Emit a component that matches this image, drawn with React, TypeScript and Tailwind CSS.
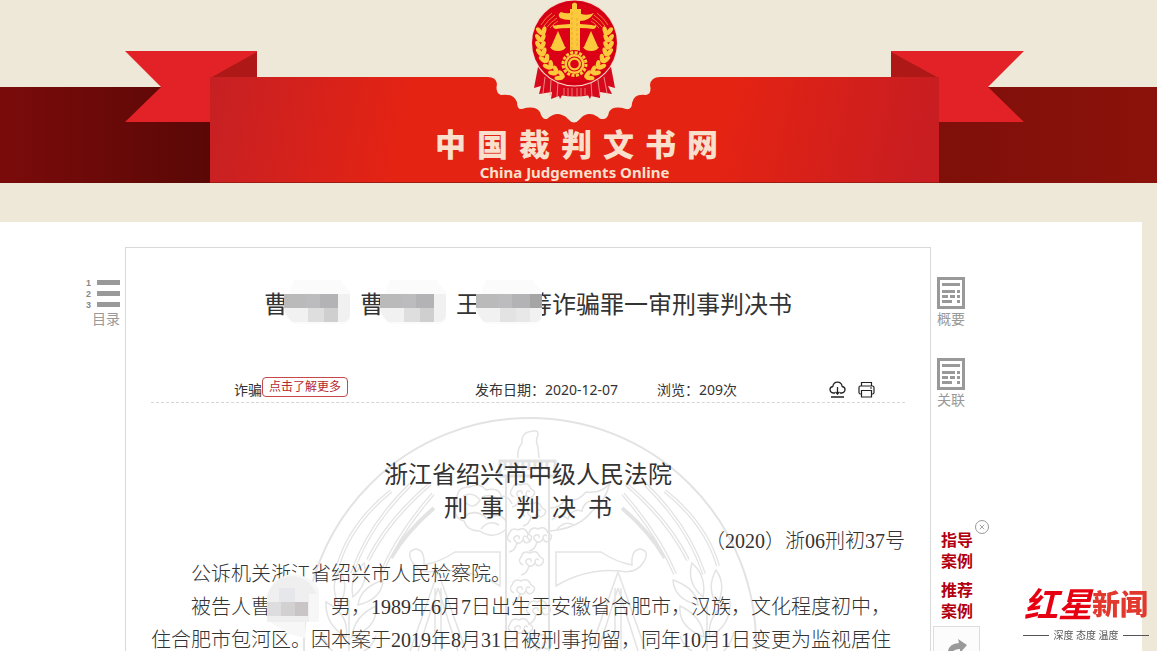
import type { ReactNode } from 'react';
import { X } from 'lucide-react';

const SANS = "font-['Noto_Sans','Noto_Sans_CJK_SC',sans-serif]";
const SERIF = "font-['Liberation_Serif','Noto_Sans_CJK_SC',serif]";

const siteName = ['中', '国', '裁', '判', '文', '书', '网'];
const docKind = ['刑', '事', '判', '决', '书'];

// ears of wheat on the left half, from the tip down to the stalk
const wheat = [
  [541, 30, -12], [540, 37, -6], [540, 44, 0], [541, 51, -10], [544, 58, -22],
  [548, 65, -36], [553, 71, -50], [559, 76, -64],
];

function Emblem() {
  const half = (
    <g>
      {wheat.map(([x, y, r]) => (
        <g key={y} transform={`translate(${x} ${y}) rotate(${r})`}>
          <ellipse cx="-2" cy="0" rx="2.3" ry="4.6" transform="rotate(-28)" />
          <ellipse cx="3" cy="0" rx="2.3" ry="4.6" transform="rotate(28)" />
        </g>
      ))}
      <path
        d="M541 25Q545 18 552 13M544 26Q548 20 555 15M547 27Q551 22 557 18M550 28Q553 24 558 21"
        fill="none"
        stroke="#f29a38"
        strokeWidth="0.8"
      />
      <path d="M558 31L551 47H565Z" />
      <path d="M550 47H566Q564 51 558 51Q552 51 550 47Z" />
    </g>
  );

  return (
    <g>
      <path d="M538 67L534 88L541 86L539 94L552 92L551 99L559 96L560 99L566 88H584L590 99L591 96L600 98L600 92L612 94L608 86L615 88L611 67Z" fill="#d60a1c" />
      <path d="M545 77L543 93M551 80L550 96M558 82L557 97M604 77L607 93M598 80L600 96M591 82L592 97" stroke="#f2a79b" strokeWidth="0.8" />
      <path d="M560 86H590V95Q575 98 560 95Z" fill="#d60a1c" />
      <path d="M564 88V95M568 88V96M572 88V96M577 88V96M581 88V96M585 88V95" stroke="#f2a79b" strokeWidth="0.7" />
      <circle cx="574.5" cy="43" r="43.5" fill="#f3ddcd" />
      <circle cx="574.5" cy="43" r="42.5" fill="#dc0016" />
      <circle cx="574.5" cy="43" r="40.5" fill="none" stroke="#c50012" strokeWidth="1" />
      <g fill="#fbc93b">
        {half}
        <g transform="translate(1149 0) scale(-1 1)">{half}</g>
        <path d="M572 4Q575 1 577 4V9H581V14Q588 16 594 13Q589 21 580 21V53H570V20Q564 20 560 18Q557 14 561 12Q566 14 570 13V9H572Z" />
        <path d="M570 28Q561 28 556 29Q552 28 553 25Q555 26 557 25L570 24ZM580 24L592 25Q594 26 596 25Q597 28 593 29Q588 28 580 28Z" />
      </g>
      <path d="M572 12V50M577 18V48" stroke="#f0a233" strokeWidth="0.8" strokeDasharray="3 2" />
      <circle cx="574.5" cy="64" r="14" fill="#dc0016" />
      <circle cx="574.5" cy="64" r="11.5" fill="none" stroke="#fbc93b" strokeWidth="3" strokeDasharray="3 1.5" />
      <circle cx="574.5" cy="64" r="10" fill="#fbc93b" />
      <circle cx="574.5" cy="64" r="7.5" fill="#dc0016" />
      <circle cx="574.5" cy="64" r="6.5" fill="#fbc93b" />
      <circle cx="574.5" cy="64" r="4.3" fill="#dc0016" />
    </g>
  );
}

function Ribbon() {
  return (
    <svg className="h-[183px] w-[899px]" viewBox="125 0 899 183" aria-hidden="true">
      <defs>
        <linearGradient id="front" x1="0" x2="1" y1="0" y2="0.03">
          <stop offset="0" stopColor="#c62024" />
          <stop offset="0.28" stopColor="#e42313" />
          <stop offset="0.72" stopColor="#e42313" />
          <stop offset="1" stopColor="#c81d21" />
        </linearGradient>
      </defs>
      <path d="M257 51V78H209Z" fill="#ae1917" />
      <path d="M125 51H257V52L210 78V122H125L161 87Z" fill="#e32227" />
      <path d="M891 51V78H940Z" fill="#ae1917" />
      <path d="M1024 51H891V52L939 78V122H1024L988 87Z" fill="#e32227" />
      <path d="M485 70H665V128H485Z" fill="#eee8d9" />
      <path
        d="M210 77H488Q496 77 497 84Q495 93 501 95Q513 93 517 102Q517 110 522 109Q535 105 540 112Q542 120 547 119Q555 112 562 115Q566 116 568 119Q574 126 580 119Q583 115 588 114C597 113 598 120 604 119Q608 118 609 112Q613 105 626 109Q632 110 632 103Q634 93 646 95Q652 94 650 85Q651 77 660 77H939V182H210Z"
        fill="url(#front)"
      />
      <path d="M210 182.5H939" stroke="#9f1a12" />
      <Emblem />
    </svg>
  );
}

// outline version of the court emblem printed behind the judgment
function Watermark() {
  const half = (
    <g>
      <path d="M500 552H455Q440 562 424 565Q425 550 416 549Q405 551 413 563Q420 574 436 571Q470 568 500 586Z" />
      <path d="M438 572L410 651M438 572L466 651M438 588L418 651M438 588L458 651M435 588V651M441 588V651" />
      <path
        d="M338 566Q350 524 391 491M352 574Q368 526 410 485M368 560Q388 520 430 484M381 574Q398 534 433 494M391 558Q406 532 434 508"
        strokeWidth="4"
      />
      <path
        d="M338 566Q350 524 391 491M352 574Q368 526 410 485M368 560Q388 520 430 484M381 574Q398 534 433 494"
        stroke="#ffffff"
        strokeWidth="1.5"
      />
      <path d="M340 570Q329 585 339 605Q350 588 340 570ZM364 563Q349 576 353 597Q370 583 364 563ZM383 580Q382 599 358 605Q360 588 383 580ZM326 602Q325 625 346 637Q350 615 326 602ZM376 606Q378 627 352 637Q354 616 376 606ZM322 632Q326 650 344 660M376 636Q371 651 353 656M349 600V655" />
    </g>
  );
  const cloud = 'M0 8Q-6 5 -2 0Q0 -7 7 -4Q14 -8 17 0Q23 2 19 7Q15 11 12 6Q8 12 4 7Q1 4 5 2Q9 1 8 5M12 6Q12 0 16 3M6 9Q4 17 -2 18';

  return (
    <svg
      className="pointer-events-none absolute top-2 left-1/2 -z-10 h-[250px] w-[460px] -translate-x-1/2"
      viewBox="298 411 460 250"
      fill="none"
      stroke="#e3e3e3"
      strokeWidth="1.5"
      aria-hidden="true"
    >
      <circle cx="530" cy="644" r="226" strokeWidth="2" />
      {half}
      <g transform="translate(1056 0) scale(-1 1)">{half}</g>
      <path d="M518 458Q517 449 522 443Q521 432 533 431Q539 430 538 435Q535 441 538 447L539 458" />
      <path d="M500 461H555V476H500ZM505 461V470M511 461V470M517 461V470M523 461V470M529 461V470M535 461V470M541 461V470M547 461V470" strokeWidth="3" />
      <path d="M506 476V661M549 476V661" strokeWidth="2" />
      <path d="M505 530Q493 540 480 531Q467 531 464 521Q452 518 457 504Q455 486 470 487Q479 482 486 490Q499 487 501 496Q509 496 512 504M463 496Q473 491 480 500Q474 510 466 503M482 497Q495 492 500 504Q490 512 484 505M464 516Q478 508 487 519Q499 511 506 521M481 529Q489 519 499 525" />
      <path d="M550 531Q580 528 592 511Q605 502 610 483Q602 494 586 492Q577 503 565 500Q560 508 550 508M552 520Q560 512 568 519Q572 508 582 511Q584 500 597 500M557 529Q565 520 574 525" />
      <path d={cloud} transform="translate(514 489)" />
      <path d={cloud} transform="translate(525 508)" />
      <path d={cloud} transform="translate(511 534)" />
      <path d={cloud} transform="translate(531 533)" />
      <path d={cloud} transform="translate(523 557)" />
      <path d={cloud} transform="translate(514 585)" />
      <path d={cloud} transform="translate(530 606)" />
      <path d={cloud} transform="translate(512 624)" />
      <path d={cloud} transform="translate(531 640)" />
    </svg>
  );
}

function Mosaic({ wide }: { wide?: boolean }) {
  return (
    <svg className="absolute -top-[6px] -left-1 h-11 w-[68px]" viewBox="0 0 68 44" aria-hidden="true">
      <path d="M4 16L10 0H56L66 12V40L60 44H10L0 34V16Z" fill="#fbfbfb" />
      <path d="M0 14H66V36Q64 42 58 42H8Q0 34 0 26Z" fill="#f1f1f1" />
      <path d="M0 14H24V28H0Z" fill="#b9bab9" />
      <path d="M22 14H38V28H22Z" fill="#bcbbbe" />
      <path d="M36 14H54V28H36Z" fill="#b3b2b4" />
      <path d="M24 28H40V42H24Z" fill={wide ? '#e3e3e3' : '#dedede'} />
      <path d="M40 28H54V42H40Z" fill={wide ? '#e8e8e8' : '#cfcfcf'} />
      {wide && <path d="M54 14H66V28H54Z" fill="#a5a5a6" />}
    </svg>
  );
}

function PageIcon() {
  return (
    <svg className="h-8 w-7" viewBox="0 0 28 32" aria-hidden="true">
      <path d="M1.5 1.5H26.5V30.5H1.5Z" fill="#ffffff" stroke="#999999" strokeWidth="3" />
      <path d="M5 7.5H23M5 14.5H18M20 14.5H23M5 19.5H11M13 19.5H18M20 19.5H23M5 24.5H15M20 24.5H23" stroke="#999999" strokeWidth="3" />
    </svg>
  );
}

function SideButton({ label, children }: { label: string; children: ReactNode }) {
  return (
    <button type="button" className="flex flex-col items-start text-sm leading-5 text-[#999]">
      {children}
      <span>{label}</span>
    </button>
  );
}

function NewsBadge() {
  return (
    <div className="fixed right-2 bottom-2 flex w-[126px] flex-col items-center">
      <div className="mb-1 flex items-end font-['Noto_Sans_CJK_SC',sans-serif] leading-10">
        <span className="text-[34px] font-bold text-[#e60012] italic">红星</span>
        <span className="text-[28px] font-black text-[#e2392f]">新闻</span>
      </div>
      <div className="flex w-full items-center gap-1 text-[10px] leading-4 whitespace-nowrap text-[#555]">
        <span className="h-px flex-1 bg-[#555]" />
        <span>深度 态度 温度</span>
        <span className="h-px flex-1 bg-[#555]" />
      </div>
    </div>
  );
}

export default function App() {
  return (
    <div className={`${SANS} flex h-screen flex-col overflow-hidden bg-[#eee8d9] text-[#333]`}>
      <header className="relative h-[183px] shrink-0 pr-2">
        <div className="absolute inset-x-0 top-[87px] bottom-0 bg-linear-to-r from-[#7b0b0b] via-[#5a0806] via-18% to-[#8b120b]" />
        <div className="relative mx-auto flex w-[899px] flex-col items-center">
          <Ribbon />
          <div className="absolute top-[124px] flex flex-col items-center text-[#f8e0cd]">
            <h1 className="flex gap-[11px] pl-1 font-['Noto_Sans_CJK_SC',sans-serif] text-[31px] leading-[38px] font-black">
              {siteName.map((char) => (
                <span key={char}>{char}</span>
              ))}
            </h1>
            <p className="text-[15px] leading-5 font-bold">China Judgements Online</p>
          </div>
        </div>
      </header>

      <main className="mt-[39px] mr-[15px] flex min-h-0 flex-1 bg-white pt-[25px]">
        <nav className="flex w-[125px] shrink-0 justify-end pt-[30px] pr-[5px]">
          <div>
            <button type="button" className="flex flex-col items-end text-sm leading-5 text-[#999]">
              <svg className="h-8 w-[34px]" viewBox="0 0 34 32" aria-hidden="true">
                <path d="M11 5.5H34M11 16.5H34M11 27.5H34" stroke="#999999" strokeWidth="5" />
                <g fill="#888888" fontFamily="Liberation Sans" fontSize="9" fontWeight="700">
                  <text x="0" y="9">1</text>
                  <text x="0" y="20">2</text>
                  <text x="0" y="31">3</text>
                </g>
              </svg>
              <span>目录</span>
            </button>
          </div>
        </nav>

        <article className="min-w-0 flex-1 border border-b-0 border-[#d9d9d9] px-[25px]">
          <h2 className="mt-[38px] flex justify-center text-2xl leading-9 whitespace-nowrap">
            曹
            <span className="relative w-[72px]">
              <Mosaic />
            </span>
            曹
            <span className="relative w-[72px]">
              <Mosaic />
            </span>
            王
            <span className="w-12" />
            <span className="relative">
              等诈骗罪一审刑事判决书
              <span className="absolute top-0 -left-12">
                <Mosaic wide />
              </span>
            </span>
          </h2>

          <div className="mt-[55px] flex h-[26px] items-center border-b border-dashed border-[#d5d5d5] pr-[30px] pl-[83px] text-sm whitespace-nowrap">
            <div className="flex w-[241px] items-center">
              诈骗
              <a href="#more" className="mb-[6px] rounded border border-[#c7474b] px-[6px] text-xs leading-[18px] text-[#b52a2e]">
                点击了解更多
              </a>
            </div>
            <span className="w-[182px]">发布日期：2020-12-07</span>
            <span className="flex-1">浏览：209次</span>
            <div className="flex gap-3 text-[#222]">
              <button type="button" aria-label="下载">
                <svg className="size-[17px]" viewBox="0 0 17 17" fill="none" stroke="currentColor" strokeWidth="1.3" aria-hidden="true">
                  <path d="M6 12H4.5Q1 11.500 1 8.500Q1 6 3.800 5.500Q4.500 1.200 8.500 1.200Q12.500 1.200 13.200 5.500Q16 6 16 8.500Q16 11.500 12.500 12H11M8.500 6V13M6.500 11L8.500 13L10.500 11M2 16H15" />
                </svg>
              </button>
              <button type="button" aria-label="打印">
                <svg className="size-[17px]" viewBox="0 0 17 17" fill="none" stroke="currentColor" strokeWidth="1.2" aria-hidden="true">
                  <path d="M3.500 5V1.500H13.500V5M3.500 13H2.500Q1 13 1 11.500V6.500Q1 5 2.500 5H14.500Q16 5 16 6.500V11.500Q16 13 14.500 13H13.500M3.500 9.500H13.500V16H3.500ZM12 7H14" />
                </svg>
              </button>
            </div>
          </div>

          <section className="relative isolate pt-[54px]">
            <Watermark />
            <h3 className="text-center text-2xl leading-[33px]">
              浙江省绍兴市中级人民法院
              <span className="flex justify-center gap-3">
                {docKind.map((char) => (
                  <span key={char}>{char}</span>
                ))}
              </span>
            </h3>
            <div className={`${SERIF} pt-[2px] text-xl leading-[33px] font-light`}>
              <p className="text-right">（2020）浙06刑初37号</p>
              <p className="indent-10">公诉机关浙江省绍兴市人民检察院。</p>
              <p className="indent-10">
                被告人曹
                <span className="relative inline-block w-[60px] indent-0">
                  <svg className="absolute -top-[40px] -left-1 h-[66px] w-[60px]" viewBox="0 0 60 66" aria-hidden="true">
                    <path d="M0 26Q4 2 26 0Q46 2 52 16V48H38V64L22 60L0 46Z" fill="#f7f7f7" />
                    <path d="M0 22Q6 2 26 2Q42 4 50 20H42V48H0Z" fill="#efefef" />
                    <path d="M12 14H28V28H12Z" fill="#e6e7ea" />
                    <path d="M0 28H14V42H0Z" fill="#dddddf" />
                    <path d="M14 28H28V42H14Z" fill="#d3d0d2" />
                    <path d="M28 28H41V42H28Z" fill="#c9c5c7" />
                  </svg>
                </span>
                男，1989年6月7日出生于安徽省合肥市，汉族，文化程度初中，
              </p>
              <p className="whitespace-nowrap">
                住合肥市包河区。因本案于2019年8月31日被刑事拘留，同年10月1日变更为监视居住
              </p>
            </div>
          </section>
        </article>

        <aside className="w-[211px] shrink-0 pt-[30px] pl-[6px]">
          <div className="flex flex-col gap-[29px]">
            <SideButton label="概要">
              <PageIcon />
            </SideButton>
            <SideButton label="关联">
              <PageIcon />
            </SideButton>
          </div>
          <div className="relative mt-[120px] w-12">
            <button
              type="button"
              aria-label="关闭"
              className="absolute -top-[10px] -right-1 flex size-[14px] items-center justify-center rounded-full border border-[#999] text-[#777]"
            >
              <X size={8} />
            </button>
            <div className="flex w-8 flex-col gap-2 pl-1 text-base leading-[21px] font-bold text-[#b3000f]">
              <a href="#guiding" className="w-8">指导案例</a>
              <a href="#recommended" className="w-8">推荐案例</a>
            </div>
            <button
              type="button"
              aria-label="分享"
              className="mt-1 -ml-1 flex h-12 w-[47px] justify-center border border-[#ddd] bg-[#fcfcfc] pt-[10px]"
            >
              <svg className="h-6 w-6" viewBox="0 0 24 24" aria-hidden="true">
                <path d="M13 2L22 8L15 16V12Q7 12 3 20Q1 7 14 6Z" fill="#999999" />
              </svg>
            </button>
          </div>
        </aside>
      </main>

      <NewsBadge />
    </div>
  );
}
